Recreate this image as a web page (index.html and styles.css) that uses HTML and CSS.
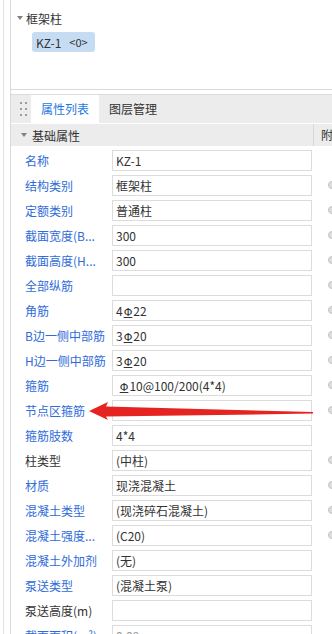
FILE: index.html
```html
<!DOCTYPE html>
<html lang="zh-CN">
<head>
    <meta charset="utf-8">
    <title>属性列表</title>
    <link rel="stylesheet" href="styles.css">
</head>
<body>
    <div class="app">
        <div class="edge"></div>
        <div class="main">
            <!-- 构件树 -->
            <div class="tree">
                <div class="tree-group"><span class="caret"></span>框架柱</div>
                <div class="tree-node"><span>KZ-1</span><span class="node-count">&lt;0&gt;</span></div>
            </div>

            <!-- 选项卡 -->
            <div class="tabs">
                <div class="grip"><i></i><i></i><i></i><i></i><i></i><i></i></div>
                <div class="tab active">属性列表</div>
                <div class="tab">图层管理</div>
            </div>

            <div class="section">
                <div class="section-title"><span class="caret"></span>基础属性</div>
                <div class="section-extra">附加</div>
            </div>

            <!-- 属性行 -->
            <div class="props">
                <div class="row"><div class="label">名称</div><div class="value">KZ-1</div><div></div></div>
                <div class="row"><div class="label">结构类别</div><div class="value">框架柱</div><div class="lock"></div></div>
                <div class="row"><div class="label">定额类别</div><div class="value">普通柱</div><div class="lock"></div></div>
                <div class="row"><div class="label">截面宽度(B...</div><div class="value">300</div><div class="lock"></div></div>
                <div class="row"><div class="label">截面高度(H...</div><div class="value">300</div><div class="lock"></div></div>
                <div class="row"><div class="label">全部纵筋</div><div class="value"></div><div class="lock"></div></div>
                <div class="row"><div class="label">角筋</div><div class="value">4<span class="hrb">Φ</span>22</div><div class="lock"></div></div>
                <div class="row"><div class="label">B边一侧中部筋</div><div class="value">3<span class="hrb">Φ</span>20</div><div class="lock"></div></div>
                <div class="row"><div class="label">H边一侧中部筋</div><div class="value">3<span class="hrb">Φ</span>20</div><div class="lock"></div></div>
                <div class="row"><div class="label">箍筋</div><div class="value"> <span class="hrb">Φ</span>10@100/200(4*4)</div><div class="lock"></div></div>
                <div class="row"><div class="label">节点区箍筋</div><div class="value"></div><div class="lock"></div></div>
                <div class="row"><div class="label">箍筋肢数</div><div class="value">4*4</div><div></div></div>
                <div class="row"><div class="label plain">柱类型</div><div class="value">(中柱)</div><div class="lock"></div></div>
                <div class="row"><div class="label">材质</div><div class="value">现浇混凝土</div><div class="lock"></div></div>
                <div class="row"><div class="label">混凝土类型</div><div class="value">(现浇碎石混凝土)</div><div class="lock"></div></div>
                <div class="row"><div class="label">混凝土强度...</div><div class="value">(C20)</div><div class="lock"></div></div>
                <div class="row"><div class="label">混凝土外加剂</div><div class="value">(无)</div><div></div></div>
                <div class="row"><div class="label">泵送类型</div><div class="value">(混凝土泵)</div><div></div></div>
                <div class="row"><div class="label plain">泵送高度(m)</div><div class="value"></div><div></div></div>
                <div class="row"><div class="label">截面面积(m²)</div><div class="value muted">0.09</div><div></div></div>
            </div>
        </div>

        <!-- 标注箭头 -->
        <svg class="arrow" width="332" height="634" viewBox="0 0 332 634">
            <polygon points="89,411 108,402 106,406.5 313,412 313,413.6 106,416.5 108,420" fill="#e52421"/>
        </svg>
    </div>
</body>
</html>
```

FILE: styles.css
```css
* {
    box-sizing: border-box;
    margin: 0;
    padding: 0;
}

body {
    font-family: "Noto Sans CJK SC", "Noto Sans", sans-serif;
    font-size: 12px;
    color: #333;
    background: #fff;
}

.app {
    position: relative;
    display: flex;
    width: 332px;
    height: 634px;
    overflow: hidden;
}

.edge {
    flex: none;
    width: 7px;
    margin-left: 3px;
    border-left: 1px solid #e2e2e2;
}

.main {
    flex: 1;
    min-width: 0;
    display: flex;
    flex-direction: column;
    border-left: 1px solid #d9d9d9;
}

/* tree */
.tree {
    flex: none;
    height: 90px;
    padding: 8px 0 0 6px;
    border-bottom: 1px solid #d9d9d9;
}

.tree-group {
    display: flex;
    align-items: center;
    height: 20px;
}

.caret {
    width: 0;
    height: 0;
    margin-right: 3px;
    border-left: 3px solid transparent;
    border-right: 3px solid transparent;
    border-top: 4px solid #808080;
}

.tree-node {
    display: flex;
    align-items: center;
    width: 63px;
    height: 20px;
    margin: 4px 0 0 15px;
    padding-left: 4px;
    background: #c6dcf3;
    border-radius: 3px;
}

.node-count {
    margin-left: 8px;
    font-size: 11px;
}

/* tabs */
.tabs {
    flex: none;
    display: flex;
    height: 30px;
    margin-top: 4px;
    background: #ececec;
    border-top: 1px solid #dcdcdc;
    border-bottom: 1px solid #fff;
}

.grip {
    width: 20px;
    padding-left: 9px;
    display: grid;
    grid-template-columns: repeat(2, 2px);
    grid-auto-rows: 2px;
    column-gap: 3px;
    row-gap: 4px;
    align-content: center;
}

.grip i {
    background: #9a9a9a;
}

.tab {
    padding: 0 10px;
    line-height: 28px;
}

.tab.active {
    background: #fff;
    color: #1f78e0;
}

/* section header */
.section {
    flex: none;
    display: flex;
    height: 22px;
    background: #ececec;
}

.section-title {
    flex: none;
    width: 302px;
    display: flex;
    align-items: center;
    padding-left: 10px;
}

.section-title .caret {
    margin-right: 5px;
}

.section-extra {
    padding-left: 7px;
    line-height: 22px;
    white-space: nowrap;
    border-left: 1px solid #d8d8d8;
}

/* rows */
.row {
    display: grid;
    grid-template-columns: 101px 200px 1fr;
    align-items: start;
    height: 25px;
    padding-top: 4px;
}

.label {
    padding-left: 14px;
    line-height: 21px;
    color: #2f6bd9;
    white-space: nowrap;
    overflow: hidden;
}

.label.plain {
    color: #333;
}

.value {
    height: 21px;
    padding-left: 3px;
    line-height: 19px;
    border: 1px solid #dcdcdc;
    white-space: pre;
    overflow: hidden;
}

.value.muted {
    color: #999;
}

.hrb {
    font-family: "DejaVu Sans", sans-serif;
    font-size: 11px;
    margin: 0 1px;
    text-decoration: underline;
    text-underline-offset: 1px;
}

.lock {
    width: 8px;
    height: 8px;
    margin: 6px 0 0 16px;
    border-radius: 50%;
    background: #dedede;
    border: 1px solid #c2c2c2;
}

.arrow {
    position: absolute;
    left: 0;
    top: 0;
    pointer-events: none;
}
```
